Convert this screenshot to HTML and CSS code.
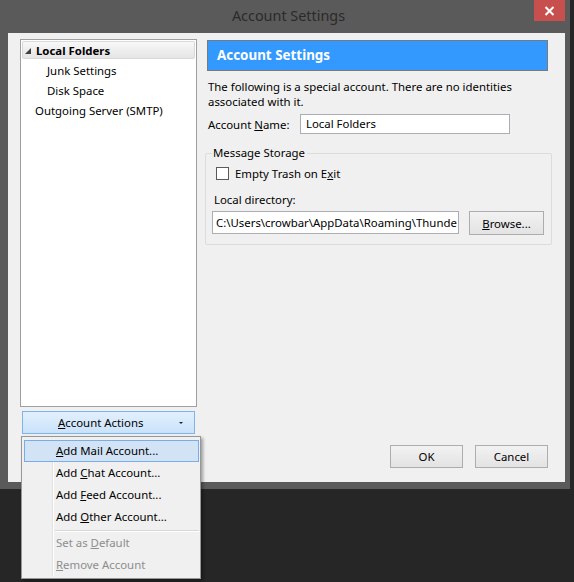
FILE: index.html
```html
<!DOCTYPE html>
<html>
<head>
<meta charset="utf-8">
<link rel="stylesheet" href="styles.css">
</head>
<body>
<div class="screen">
  <div class="window">
    <div class="titlebar">
      <div class="title">Account Settings</div>
      <div class="close"><svg width="11" height="10" viewBox="0 0 11 10"><path d="M1.5 1 L9.5 9 M9.5 1 L1.5 9" stroke="#fff" stroke-width="2"/></svg></div>
    </div>
    <div class="client">
      <div class="left">
        <div class="tree">
          <div class="row sel"><span class="twisty"></span><b>Local Folders</b></div>
          <div class="row sub">Junk Settings</div>
          <div class="row sub">Disk Space</div>
          <div class="row top">Outgoing Server (SMTP)</div>
        </div>
        <div class="actions-btn"><span class="lbl"><u>A</u>ccount Actions</span><span class="arrow"></span></div>
      </div>
      <div class="right">
        <div class="header">Account Settings</div>
        <p class="desc">The following is a special account. There are no identities associated with it.</p>
        <div class="name-row">
          <span class="label">Account <u>N</u>ame:</span>
          <div class="input name-input">Local Folders</div>
        </div>
        <fieldset class="group">
          <legend>Message Storage</legend>
          <div class="check-row"><span class="checkbox"></span><span>Empty Trash on E<u>x</u>it</span></div>
          <div class="dir-label">Local directory:</div>
          <div class="dir-row">
            <div class="input dir-input">C:\Users\crowbar\AppData\Roaming\Thunde</div>
            <div class="btn browse"><u>B</u>rowse...</div>
          </div>
        </fieldset>
        <div class="dialog-btns">
          <div class="btn">OK</div>
          <div class="btn">Cancel</div>
        </div>
      </div>
      <div class="menu">
        <div class="gutter"></div>
        <div class="mi hl"><u>A</u>dd Mail Account...</div>
        <div class="mi">Add <u>C</u>hat Account...</div>
        <div class="mi">Add <u>F</u>eed Account...</div>
        <div class="mi">Add <u>O</u>ther Account...</div>
        <div class="sep"></div>
        <div class="mi dis">Set as <u>D</u>efault</div>
        <div class="mi dis"><u>R</u>emove Account</div>
      </div>
    </div>
  </div>
</div>
</body>
</html>
```

FILE: styles.css
```css
html, body {
  margin: 0;
  padding: 0;
  background: #262626;
}
.screen {
  width: 574px;
  height: 582px;
  overflow: hidden;
  font-family: "Noto Sans", "Open Sans", sans-serif;
  font-size: 11.4px;
  color: #000;
}
.window {
  width: 570px;
  height: 489px;
  background: #5a5a5a;
  box-sizing: border-box;
  padding: 0 5px 0 8px;
}
.titlebar {
  height: 33px;
  position: relative;
  display: flex;
  justify-content: center;
}
.title {
  color: #2a2a2a;
  font-size: 14.4px;
  line-height: 31px;
  padding-left: 4px;
}
.close {
  position: absolute;
  right: 0;
  top: 0;
  width: 31px;
  height: 21px;
  background: #c7504f;
  display: flex;
  align-items: center;
  justify-content: center;
}
.client {
  position: relative;
  height: 449px;
  background: #f0f0f0;
  box-sizing: border-box;
  padding: 6px 14px 0 12px;
  display: flex;
}
.left {
  width: 177px;
  display: flex;
  flex-direction: column;
}
.tree {
  height: 368px;
  box-sizing: border-box;
  border: 1px solid #a0a0a0;
  background: #fff;
  padding: 1px 1px;
}
.row {
  height: 20px;
  line-height: 20px;
  white-space: nowrap;
}
.row.sel {
  height: 18px;
  line-height: 17px;
  margin-bottom: 2px;
  box-sizing: border-box;
  border: 1px solid #d9d9d9;
  border-radius: 2px;
  background: linear-gradient(#f8f8f8, #e5e5e5);
  padding-left: 2px;
  display: flex;
  align-items: center;
}
.twisty {
  width: 0;
  height: 0;
  border-left: 6px solid transparent;
  border-bottom: 6px solid #404040;
  margin-right: 5px;
  margin-top: 1px;
}
.row.sub { padding-left: 25px; }
.row.top { padding-left: 13px; }
.actions-btn {
  margin: 4px 0 0 2px;
  width: 173px;
  height: 23px;
  box-sizing: border-box;
  border: 1px solid #7eb4ea;
  background: linear-gradient(#e3f0fd, #c9e2fb);
  display: flex;
  align-items: center;
  position: relative;
}
.actions-btn .lbl {
  margin-left: 35px;
}
.arrow {
  position: absolute;
  right: 11px;
  top: 10px;
  width: 0;
  height: 0;
  border-left: 2px solid transparent;
  border-right: 2px solid transparent;
  border-top: 2px solid #222;
}
.right {
  margin-left: 8px;
  width: 346px;
  display: flex;
  flex-direction: column;
}
.header {
  margin: 1px 0 0 2px;
  width: 341px;
  height: 31px;
  box-sizing: border-box;
  border: 1px solid #7a7a7a;
  background: #3399ff;
  color: #fff;
  font-weight: bold;
  font-size: 13.4px;
  line-height: 28px;
  padding-left: 9px;
}
.desc {
  margin: 8px 0 0 3px;
  line-height: 15px;
  width: 320px;
}
.name-row {
  display: flex;
  align-items: center;
  margin: 5px 0 0 3px;
  height: 20px;
}
.name-row .label { width: 92px; }
.input {
  box-sizing: border-box;
  border: 1px solid #abadb3;
  background: #fff;
  white-space: nowrap;
  overflow: hidden;
  padding-left: 4px;
}
.name-input {
  width: 210px;
  height: 20px;
  line-height: 18px;
  padding-left: 5px;
}
.group {
  margin: 12px 0 0 0;
  width: 346px;
  height: 99px;
  box-sizing: border-box;
  border: 1px solid #dcdcdc;
  border-radius: 2px;
  padding: 0 7px 0 6px;
}
.group legend {
  padding: 0 2px 0 1px;
  margin-left: 0;
  line-height: 14px;
}
.check-row {
  display: flex;
  align-items: center;
  margin: 6px 0 0 4px;
  height: 14px;
}
.checkbox {
  width: 13px;
  height: 13px;
  box-sizing: border-box;
  border: 1px solid #5a5a5a;
  background: #fff;
  margin-right: 6px;
}
.dir-label {
  margin: 12px 0 0 2px;
  line-height: 15px;
}
.dir-row {
  display: flex;
  margin-top: 4px;
}
.dir-input {
  width: 247px;
  height: 23px;
  line-height: 21px;
  padding-left: 3px;
}
.btn {
  box-sizing: border-box;
  border: 1px solid #adadad;
  background: linear-gradient(#f2f2f2, #e3e3e3);
  display: flex;
  align-items: center;
  justify-content: center;
  width: 73px;
  height: 23px;
}
.browse {
  margin-left: 10px;
  width: 75px;
  height: 24px;
}
.dialog-btns {
  margin-top: auto;
  margin-bottom: 14px;
  margin-right: 3px;
  display: flex;
  justify-content: flex-end;
  gap: 12px;
}
.menu {
  position: absolute;
  left: 13px;
  top: 403px;
  width: 180px;
  height: 143px;
  box-sizing: border-box;
  border: 1px solid #979797;
  background: #f0f0f0;
  box-shadow: 2px 2px 3px rgba(0,0,0,0.35);
  padding: 3px 1px 0 2px;
}
.gutter {
  position: absolute;
  left: 30px;
  top: 2px;
  bottom: 2px;
  width: 1px;
  background: #e2e2e2;
  border-right: 1px solid #fff;
}
.mi {
  position: relative;
  height: 22px;
  line-height: 21px;
  padding-left: 32px;
  box-sizing: border-box;
  white-space: nowrap;
}
.mi.hl {
  border: 1px solid #78aee5;
  background: #d1e3f5;
  padding-left: 31px;
  line-height: 19px;
}
.mi.dis { color: #8d8d8d; }
.sep {
  position: relative;
  height: 1px;
  background: #d7d7d7;
  margin: 2px 0 0 31px;
  border-bottom: 1px solid #fff;
}
```
